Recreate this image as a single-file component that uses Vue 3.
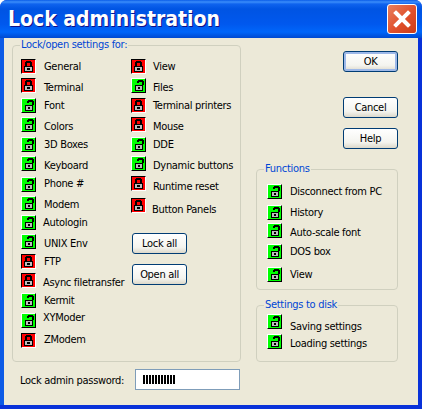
<template>
  <div class="window">
    <div class="titlebar">
      <span class="title">Lock administration</span>
      <button class="close" aria-label="Close">
        <svg width="18" height="18" viewBox="0 0 18 18">
          <path d="M3 3 L15 15 M15 3 L3 15" stroke="#fff" stroke-width="4" stroke-linecap="square" fill="none" />
        </svg>
      </button>
    </div>

    <div class="body">
      <div class="left">
        <fieldset class="group main-group">
          <legend>Lock/open settings for:</legend>
          <div class="columns">
            <div class="col">
              <div v-for="item in leftItems" :key="item.name" class="row" :style="rowStyle(item)">
                <span class="lock" :class="item.open ? 'open' : 'closed'">
                  <svg width="13" height="13" viewBox="0 0 13 13" shape-rendering="crispEdges">
                    <path v-for="p in lockParts(item.open)" :key="p.fill" :d="p.d" :fill="p.fill" />
                  </svg>
                </span>
                <span class="label" :style="labelStyle(item)">{{ item.name }}</span>
              </div>
            </div>
            <div class="col">
              <div v-for="item in midItems" :key="item.name" class="row" :style="rowStyle(item)">
                <span class="lock" :class="item.open ? 'open' : 'closed'">
                  <svg width="13" height="13" viewBox="0 0 13 13" shape-rendering="crispEdges">
                    <path v-for="p in lockParts(item.open)" :key="p.fill" :d="p.d" :fill="p.fill" />
                  </svg>
                </span>
                <span class="label" :style="labelStyle(item)">{{ item.name }}</span>
              </div>
              <button class="btn lock-all">Lock all</button>
              <button class="btn open-all">Open all</button>
            </div>
          </div>
        </fieldset>
        <div class="password">
          <label>Lock admin password:</label>
          <div class="pw-input"><span class="pw-bars"></span></div>
        </div>
      </div>

      <div class="right">
        <button class="btn default ok">OK</button>
        <button class="btn cancel">Cancel</button>
        <button class="btn help">Help</button>

        <fieldset class="group functions">
          <legend>Functions</legend>
          <div v-for="item in functionItems" :key="item.name" class="row" :style="rowStyle(item)">
            <span class="lock open">
              <svg width="13" height="13" viewBox="0 0 13 13" shape-rendering="crispEdges">
                <path v-for="p in lockParts(true)" :key="p.fill" :d="p.d" :fill="p.fill" />
              </svg>
            </span>
            <span class="label" :style="labelStyle(item)">{{ item.name }}</span>
          </div>
        </fieldset>

        <fieldset class="group disk">
          <legend>Settings to disk</legend>
          <div v-for="item in diskItems" :key="item.name" class="row" :style="rowStyle(item)">
            <span class="lock open">
              <svg width="13" height="13" viewBox="0 0 13 13" shape-rendering="crispEdges">
                <path v-for="p in lockParts(true)" :key="p.fill" :d="p.d" :fill="p.fill" />
              </svg>
            </span>
            <span class="label" :style="labelStyle(item)">{{ item.name }}</span>
          </div>
        </fieldset>
      </div>
    </div>
  </div>
</template>

<script setup>
// lock glyph on a 13x13 grid: black outline, grey body, black keyhole
const closedLock = [
  { fill: '#000', d: 'M4 1h5v1h1v4h1v6H2V6h1V2h1zM5 3v3h3V3z' },
  { fill: '#bdbdbd', d: 'M3 7h7v4H3zM5 8v2h3V8z' }
]
const openLock = [
  { fill: '#000', d: 'M6 1h5v1h1v4h-2V3H7v1H5V2h1zM3 6h8v6H3z' },
  { fill: '#bdbdbd', d: 'M4 7h6v4H4zM6 8v2h2V8z' }
]
const lockParts = (open) => (open ? openLock : closedLock)

// h = row height, dy = label offset from icon top, dx = label x tweak
const leftItems = [
  { name: 'General', open: false, h: 19, dy: 1 },
  { name: 'Terminal', open: false, h: 20, dy: 3 },
  { name: 'Font', open: true, h: 19, dy: 1 },
  { name: 'Colors', open: true, h: 20, dy: 3 },
  { name: '3D Boxes', open: true, h: 19, dy: 1 },
  { name: 'Keyboard', open: true, h: 21, dy: 3 },
  { name: 'Phone #', open: true, h: 19, dy: 0 },
  { name: 'Modem', open: true, h: 19, dy: 2 },
  { name: 'Autologin', open: true, h: 19, dy: 1, dx: -1 },
  { name: 'UNIX Env', open: true, h: 20, dy: 3 },
  { name: 'FTP', open: false, h: 19, dy: 1 },
  { name: 'Async filetransfer', open: false, h: 20, dy: 3, dx: -1 },
  { name: 'Kermit', open: true, h: 20, dy: 1 },
  { name: 'XYModer', open: true, h: 20, dy: -2, dx: -1 },
  { name: 'ZModem', open: false, h: 20, dy: 0 }
]

const midItems = [
  { name: 'View', open: false, h: 19, dy: 1, dx: -1 },
  { name: 'Files', open: true, h: 20, dy: 3, dx: -1 },
  { name: 'Terminal printers', open: false, h: 19, dy: 1, dx: -1 },
  { name: 'Mouse', open: false, h: 20, dy: 3, dx: -1 },
  { name: 'DDE', open: true, h: 19, dy: 1, dx: -1 },
  { name: 'Dynamic buttons', open: true, h: 20, dy: 3, dx: -1 },
  { name: 'Runtime reset', open: false, h: 22, dy: 4, dx: -1 },
  { name: 'Button Panels', open: false, h: 20, dy: 5, dx: -2 }
]

const functionItems = [
  { name: 'Disconnect from PC', h: 21, dy: 1 },
  { name: 'History', h: 18, dy: 1 },
  { name: 'Auto-scale font', h: 21, dy: 3 },
  { name: 'DOS box', h: 23, dy: 1 },
  { name: 'View', h: 15, dy: 1 }
]

const diskItems = [
  { name: 'Saving settings', h: 20, dy: 6 },
  { name: 'Loading settings', h: 15, dy: 3 }
]

const rowStyle = (item) => ({ height: item.h + 'px' })
const labelStyle = (item) => ({
  marginTop: item.dy + 'px',
  marginLeft: (item.dx || 0) + 'px'
})
</script>

<style>
html,
body {
  margin: 0;
  background: #fff;
}
</style>

<style scoped>
.window {
  width: 422px;
  height: 409px;
  box-sizing: border-box;
  display: flex;
  flex-direction: column;
  background: #0831d9;
  border-radius: 7px 7px 0 0;
  overflow: hidden;
  font-family: "DejaVu Sans", Tahoma, sans-serif;
  font-stretch: condensed;
  font-size: 11px;
  letter-spacing: -0.3px;
  color: #000;
}

.titlebar {
  height: 38px;
  flex: none;
  display: flex;
  align-items: center;
  justify-content: space-between;
  padding: 0 5px 0 8px;
  background: linear-gradient(#0a5ce8 0, #3b8dfa 2px, #0f63ee 4px, #0054e3 9px, #0058ee 24px, #0066fa 32px, #0049d0 38px);
}

.title {
  font-weight: bold;
  font-size: 21px;
  letter-spacing: 0;
  color: #fff;
  text-shadow: 1px 1px 0 #0f1089;
  white-space: nowrap;
}

.close {
  width: 30px;
  height: 30px;
  padding: 0;
  display: flex;
  align-items: center;
  justify-content: center;
  border: 1px solid #fff;
  border-radius: 3px;
  background: linear-gradient(135deg, #e8805f, #e0502c 55%, #cc3c18);
}

.body {
  flex: 1;
  display: flex;
  margin: 0 4px 4px 0;
  padding: 0 0 0 8px;
  border-left: 4px solid #0d5be6;
  background: #ece9d8;
}

.left {
  width: 229px;
  flex: none;
}

.right {
  width: 142px;
  margin-left: 15px;
  flex: none;
  display: flex;
  flex-direction: column;
  align-items: flex-end;
}

.group {
  margin: 0;
  padding: 7px 0 0 10px;
  box-sizing: border-box;
  border: 1px solid #d0d0bf;
  border-radius: 4px;
  min-width: 0;
}

.group legend {
  margin-left: -3px;
  padding: 0 1px;
  height: 14px;
  line-height: 14px;
  color: #0046d5;
}

.main-group {
  height: 324px;
  padding-left: 8px;
}

.main-group legend {
  margin-left: -1px;
}

.columns {
  display: flex;
}

.col {
  display: flex;
  flex-direction: column;
}

.col:first-child {
  width: 110px;
}

.row {
  display: flex;
  align-items: flex-start;
  white-space: nowrap;
}

.label {
  line-height: 14px;
  padding-left: 8px;
}

.lock {
  width: 15px;
  height: 15px;
  flex: none;
  box-sizing: border-box;
}

.lock svg {
  display: block;
}

.lock.closed {
  background: #ff0000;
  border-top: 1px solid #000;
  border-left: 1px solid #000;
  border-right: 1px solid #fff;
  border-bottom: 1px solid #fff;
}

.lock.open {
  background: #00ff00;
  border-top: 1px solid #fff;
  border-left: 1px solid #fff;
  border-right: 1px solid #000;
  border-bottom: 1px solid #000;
}

.btn {
  width: 55px;
  height: 21px;
  padding: 0;
  box-sizing: border-box;
  font-family: inherit;
  font-stretch: inherit;
  font-size: 11px;
  letter-spacing: inherit;
  color: #000;
  border: 1px solid #003c74;
  border-radius: 3px;
  background: linear-gradient(#fff, #f4f4ef 70%, #dcd8ca);
}

.btn.default {
  box-shadow: inset 0 0 0 2px #9db8e8;
}

.lock-all {
  margin-top: 15px;
  margin-left: 1px;
}

.open-all {
  margin-top: 10px;
  margin-left: 1px;
}

.ok {
  margin-top: 13px;
}

.cancel {
  margin-top: 25px;
}

.help {
  margin-top: 10px;
}

.functions {
  width: 142px;
  height: 128px;
  margin-top: 13px;
  padding-top: 8px;
}

.disk {
  width: 142px;
  height: 64px;
  margin-top: 8px;
  padding-top: 2px;
}

.password {
  display: flex;
  align-items: center;
  justify-content: space-between;
  margin-top: 7px;
  padding-left: 8px;
}

.password label {
  padding-top: 2px;
}

.pw-input {
  width: 105px;
  height: 21px;
  box-sizing: border-box;
  margin-right: 1px;
  display: flex;
  align-items: center;
  padding-left: 7px;
  border: 1px solid #7f9db9;
  background: #fff;
}

.pw-bars {
  width: 32px;
  height: 9px;
  background: repeating-linear-gradient(90deg, #000 0 2px, #fff 2px 3px);
}
</style>
